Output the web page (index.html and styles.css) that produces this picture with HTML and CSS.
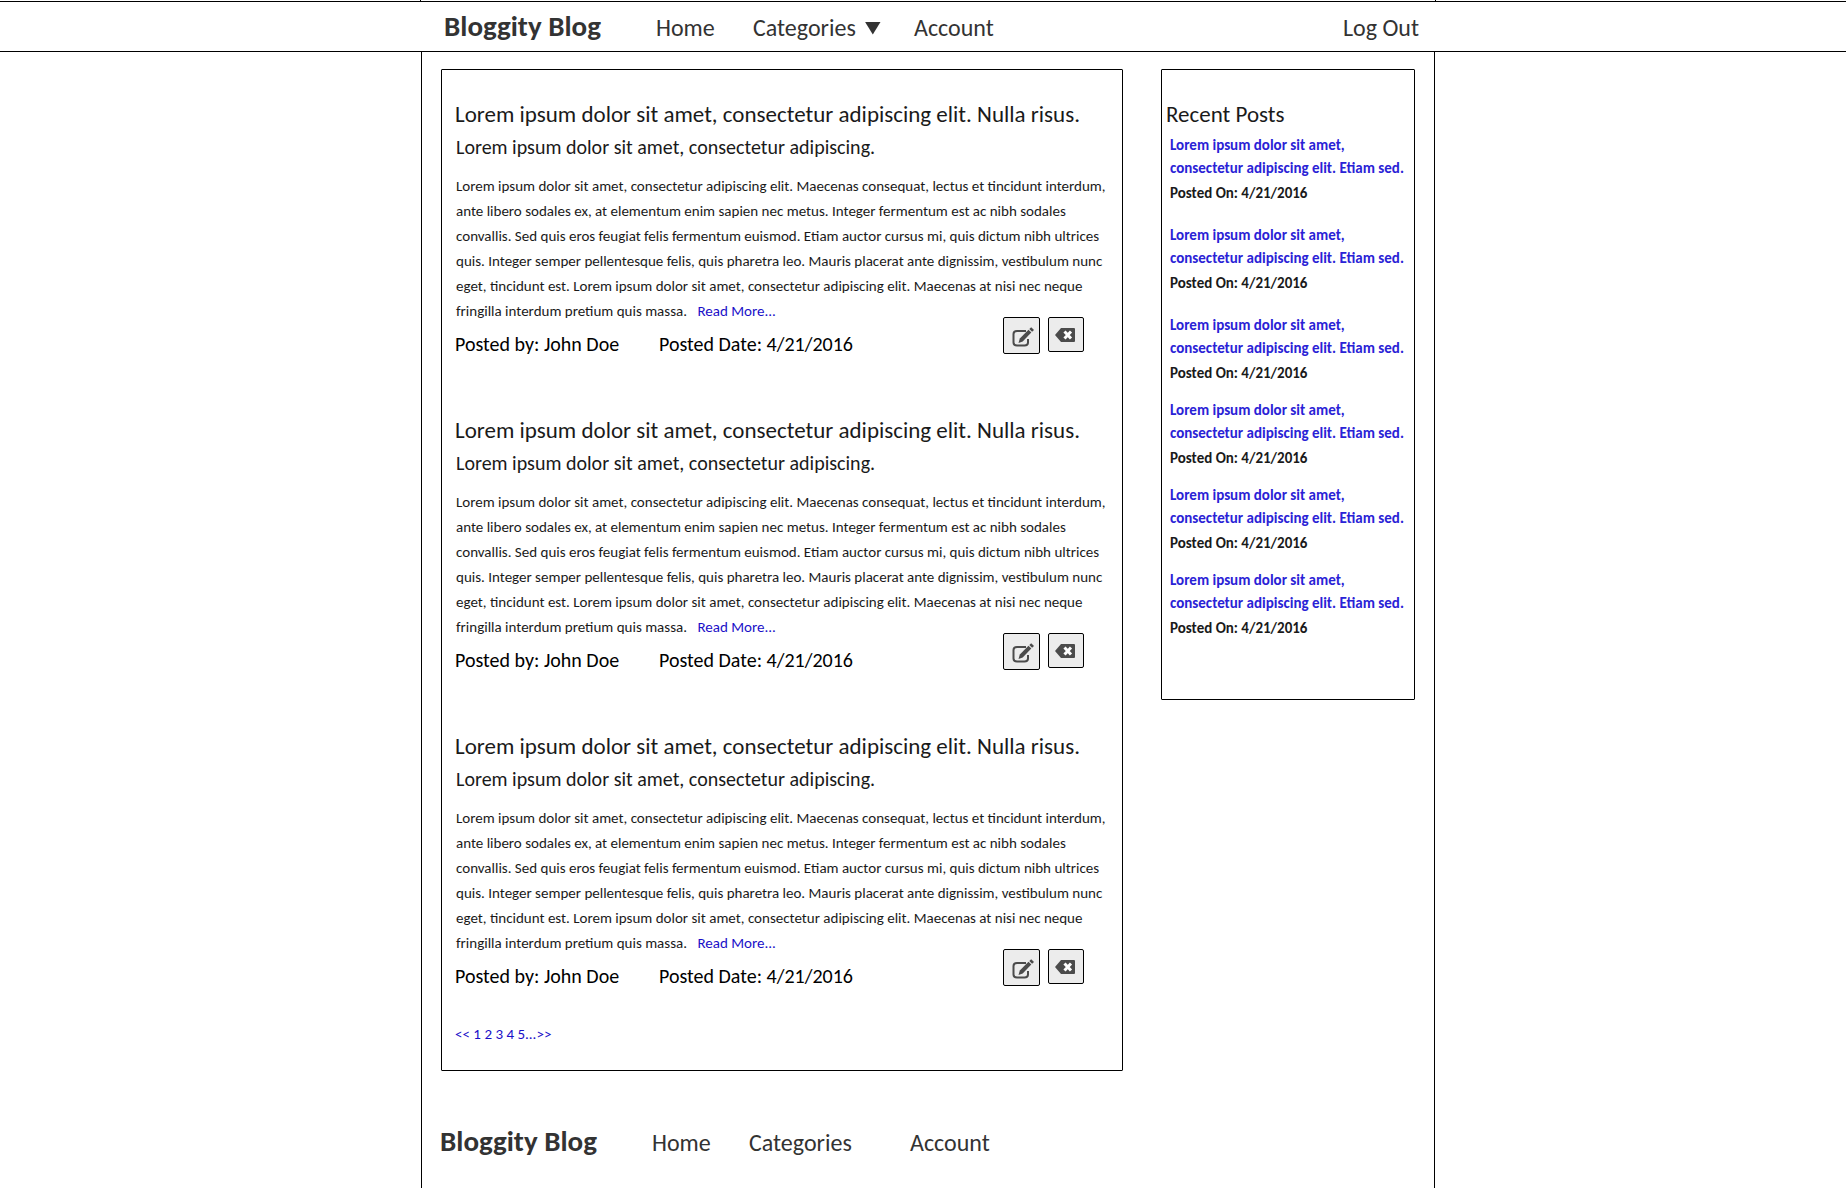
FILE: index.html
```html
<!DOCTYPE html>
<html lang="en">
<head>
<meta charset="utf-8">
<title>Bloggity Blog</title>
<link rel="stylesheet" href="styles.css">
</head>
<body>
<svg class="sprite" aria-hidden="true">
  <symbol id="icon-edit" viewBox="0 0 22 20">
    <path d="M14 4H5Q1.500 4 1.500 7V15.500Q1.500 18.500 5 18.500H12.500Q16 18.500 16 15.500V12" fill="none" stroke="#4b4b4b" stroke-width="2"/>
    <path d="M6.500 16L7.800 11.500L16.500 2.800L19.300 5.600L10.700 14.500Z" fill="#4b4b4b"/>
    <path d="M17.300 2L19.200 0.200L22 3L20.100 4.800Z" fill="#4b4b4b"/>
  </symbol>
  <symbol id="icon-delete" viewBox="0 0 20 14">
    <path d="M6 0H19Q20 0 20 1V13Q20 14 19 14H6L0 7Z" fill="#4b4b4b"/>
    <path d="M9.500 3.500L16 10.500M16 3.500L9.500 10.500" stroke="#fff" stroke-width="3"/>
  </symbol>
</svg>

<header class="site-header">
  <div class="frame site-header__inner">
    <a class="brand" href="#">Bloggity Blog</a>
    <nav class="nav" aria-label="Main">
      <a href="#">Home</a>
      <button class="nav__menu" type="button">Categories<span class="caret"></span></button>
      <a href="#">Account</a>
    </nav>
    <a class="logout" href="#">Log Out</a>
  </div>
</header>

<div class="frame page">
  <div class="columns">
    <main class="card posts">
      <article class="post">
        <h2 class="post__title">Lorem ipsum dolor sit amet, consectetur adipiscing elit. Nulla risus.</h2>
        <p class="post__subtitle">Lorem ipsum dolor sit amet, consectetur adipiscing.</p>
        <p class="post__body">Lorem ipsum dolor sit amet, consectetur adipiscing elit. Maecenas consequat, lectus et tincidunt interdum, ante libero sodales ex, at elementum enim sapien nec metus. Integer fermentum est ac nibh sodales convallis. Sed quis eros feugiat felis fermentum euismod. Etiam auctor cursus mi, quis dictum nibh ultrices quis. Integer semper pellentesque felis, quis pharetra leo. Mauris placerat ante dignissim, vestibulum nunc eget, tincidunt est. Lorem ipsum dolor sit amet, consectetur adipiscing elit. Maecenas at nisi nec neque fringilla interdum pretium quis massa. <a class="read-more" href="#">Read More...</a></p>
        <div class="post__meta">
          <span class="post__author">Posted by: John Doe</span>
          <span>Posted Date: 4/21/2016</span>
          <div class="post__actions">
            <button class="icon-button icon-button--edit" type="button" aria-label="Edit"><svg width="22" height="20"><use href="#icon-edit"/></svg></button>
            <button class="icon-button icon-button--delete" type="button" aria-label="Delete"><svg width="20" height="14"><use href="#icon-delete"/></svg></button>
          </div>
        </div>
      </article>
      <article class="post">
        <h2 class="post__title">Lorem ipsum dolor sit amet, consectetur adipiscing elit. Nulla risus.</h2>
        <p class="post__subtitle">Lorem ipsum dolor sit amet, consectetur adipiscing.</p>
        <p class="post__body">Lorem ipsum dolor sit amet, consectetur adipiscing elit. Maecenas consequat, lectus et tincidunt interdum, ante libero sodales ex, at elementum enim sapien nec metus. Integer fermentum est ac nibh sodales convallis. Sed quis eros feugiat felis fermentum euismod. Etiam auctor cursus mi, quis dictum nibh ultrices quis. Integer semper pellentesque felis, quis pharetra leo. Mauris placerat ante dignissim, vestibulum nunc eget, tincidunt est. Lorem ipsum dolor sit amet, consectetur adipiscing elit. Maecenas at nisi nec neque fringilla interdum pretium quis massa. <a class="read-more" href="#">Read More...</a></p>
        <div class="post__meta">
          <span class="post__author">Posted by: John Doe</span>
          <span>Posted Date: 4/21/2016</span>
          <div class="post__actions">
            <button class="icon-button icon-button--edit" type="button" aria-label="Edit"><svg width="22" height="20"><use href="#icon-edit"/></svg></button>
            <button class="icon-button icon-button--delete" type="button" aria-label="Delete"><svg width="20" height="14"><use href="#icon-delete"/></svg></button>
          </div>
        </div>
      </article>
      <article class="post">
        <h2 class="post__title">Lorem ipsum dolor sit amet, consectetur adipiscing elit. Nulla risus.</h2>
        <p class="post__subtitle">Lorem ipsum dolor sit amet, consectetur adipiscing.</p>
        <p class="post__body">Lorem ipsum dolor sit amet, consectetur adipiscing elit. Maecenas consequat, lectus et tincidunt interdum, ante libero sodales ex, at elementum enim sapien nec metus. Integer fermentum est ac nibh sodales convallis. Sed quis eros feugiat felis fermentum euismod. Etiam auctor cursus mi, quis dictum nibh ultrices quis. Integer semper pellentesque felis, quis pharetra leo. Mauris placerat ante dignissim, vestibulum nunc eget, tincidunt est. Lorem ipsum dolor sit amet, consectetur adipiscing elit. Maecenas at nisi nec neque fringilla interdum pretium quis massa. <a class="read-more" href="#">Read More...</a></p>
        <div class="post__meta">
          <span class="post__author">Posted by: John Doe</span>
          <span>Posted Date: 4/21/2016</span>
          <div class="post__actions">
            <button class="icon-button icon-button--edit" type="button" aria-label="Edit"><svg width="22" height="20"><use href="#icon-edit"/></svg></button>
            <button class="icon-button icon-button--delete" type="button" aria-label="Delete"><svg width="20" height="14"><use href="#icon-delete"/></svg></button>
          </div>
        </div>
      </article>
      <nav class="pagination" aria-label="Pages"><a href="#">&lt;&lt;</a> <a href="#">1</a> <a href="#">2</a> <a href="#">3</a> <a href="#">4</a> <a href="#">5</a>...<a href="#">&gt;&gt;</a></nav>
    </main>

    <aside class="card recent">
      <h2 class="recent__title">Recent Posts</h2>
      <ul class="recent__list">
        <li><a href="#">Lorem ipsum dolor sit amet, consectetur adipiscing elit. Etiam sed.</a><p>Posted On: 4/21/2016</p></li>
        <li><a href="#">Lorem ipsum dolor sit amet, consectetur adipiscing elit. Etiam sed.</a><p>Posted On: 4/21/2016</p></li>
        <li><a href="#">Lorem ipsum dolor sit amet, consectetur adipiscing elit. Etiam sed.</a><p>Posted On: 4/21/2016</p></li>
        <li><a href="#">Lorem ipsum dolor sit amet, consectetur adipiscing elit. Etiam sed.</a><p>Posted On: 4/21/2016</p></li>
        <li><a href="#">Lorem ipsum dolor sit amet, consectetur adipiscing elit. Etiam sed.</a><p>Posted On: 4/21/2016</p></li>
        <li><a href="#">Lorem ipsum dolor sit amet, consectetur adipiscing elit. Etiam sed.</a><p>Posted On: 4/21/2016</p></li>
      </ul>
    </aside>
  </div>

  <footer class="site-footer">
    <a class="brand" href="#">Bloggity Blog</a>
    <nav class="nav" aria-label="Footer">
      <a href="#">Home</a>
      <a href="#">Categories</a>
      <a href="#">Account</a>
    </nav>
  </footer>
</div>
</body>
</html>
```
FILE: styles.css
```css
* {
  box-sizing: border-box;
}

body {
  display: flex;
  flex-direction: column;
  min-height: 100vh;
  margin: 0;
  background: #fff;
  color: #1a1a1a;
  font-family: Calibri, Carlito, Lato, sans-serif;
  font-size: 15px;
}

h2,
p,
ul {
  margin: 0;
  padding: 0;
}

h2 {
  font-size: 23px;
  font-weight: 400;
  line-height: 28px;
}

a {
  color: inherit;
  text-decoration: none;
}

button {
  padding: 0;
  font: inherit;
  color: inherit;
  cursor: pointer;
}

.sprite {
  position: absolute;
  width: 0;
  height: 0;
}

/* Centred column shared by the header and the page */
.frame {
  width: 100%;
  max-width: 1014px;
  margin: 0 auto;
  position: relative;
  left: 5px;
}

/* The column rules start above the header bar */
body::before {
  content: "";
  width: 100%;
  max-width: 1014px;
  height: 1px;
  margin: 0 auto;
  position: relative;
  left: 5px;
  border: solid #000;
  border-width: 0 1px;
}

.site-header {
  border: solid #000;
  border-width: 1px 0;
}

.site-header__inner,
.site-footer {
  display: flex;
  align-items: baseline;
  color: #333;
}

.site-header__inner {
  padding: 6px 16px 7px 23px;
}

.brand {
  width: 212px;
  font-size: 29px;
  font-weight: 700;
  line-height: 36px;
}

.nav {
  display: grid;
  grid-template-columns: 97px 161px auto;
  font-size: 24px;
  line-height: 30px;
}

.nav__menu {
  display: flex;
  align-items: center;
  gap: 9px;
  border: 0;
  background: none;
}

.caret {
  width: 16px;
  height: 13px;
  background: #333;
  clip-path: polygon(0 0, 100% 0, 50% 100%);
}

.logout {
  margin-left: auto;
  font-size: 24px;
  line-height: 30px;
}

.page {
  flex: 1;
  padding: 17px 19px 0;
  border: solid #000;
  border-width: 0 1px;
}

.columns {
  display: grid;
  grid-template-columns: minmax(0, 1fr) 254px;
  align-items: start;
  gap: 38px;
}

.card {
  border: 1px solid #000;
  border-radius: 1px;
}

.posts {
  display: grid;
  gap: 59px;
  padding: 30px 13px 22px;
}

.post__subtitle {
  margin-top: 6px;
  padding-left: 1px;
  font-size: 20px;
  line-height: 26px;
}

.post__body {
  margin-top: 14px;
  padding-left: 1px;
  line-height: 25px;
}

.read-more {
  margin-left: 7px;
  color: #1a0fc8;
}

.post__meta {
  display: flex;
  align-items: flex-start;
  height: 26px;
  margin-top: 7px;
  color: #000;
  font-size: 20px;
  line-height: 26px;
}

.post__author {
  width: 204px;
}

.post__actions {
  display: flex;
  gap: 8px;
  margin: -14px 25px 0 auto;
}

.icon-button {
  display: flex;
  align-items: center;
  justify-content: center;
  border: 1px solid #000;
  border-radius: 2px;
  background: #ececec;
}

.icon-button--edit {
  width: 37px;
  height: 37px;
  padding: 2px 0 0 2px;
}

.icon-button--delete {
  width: 36px;
  height: 35px;
  padding-right: 2px;
}

.pagination {
  margin-top: -24px;
  color: #1a0fc8;
  line-height: 20px;
}

.recent {
  padding: 30px 8px 61px;
}

.recent__title {
  margin-left: -4px;
}

.recent__list {
  display: grid;
  gap: 16px;
  margin-top: 6px;
  list-style: none;
  font-weight: 700;
}

.recent__list li:nth-child(-n+2) {
  padding-bottom: 5px;
}

.recent__list a {
  display: block;
  color: #2a22d6;
  line-height: 23px;
}

.recent__list p {
  margin-top: 3px;
  line-height: 20px;
}

.site-footer {
  margin: 52px 0 26px -1px;
}
```
